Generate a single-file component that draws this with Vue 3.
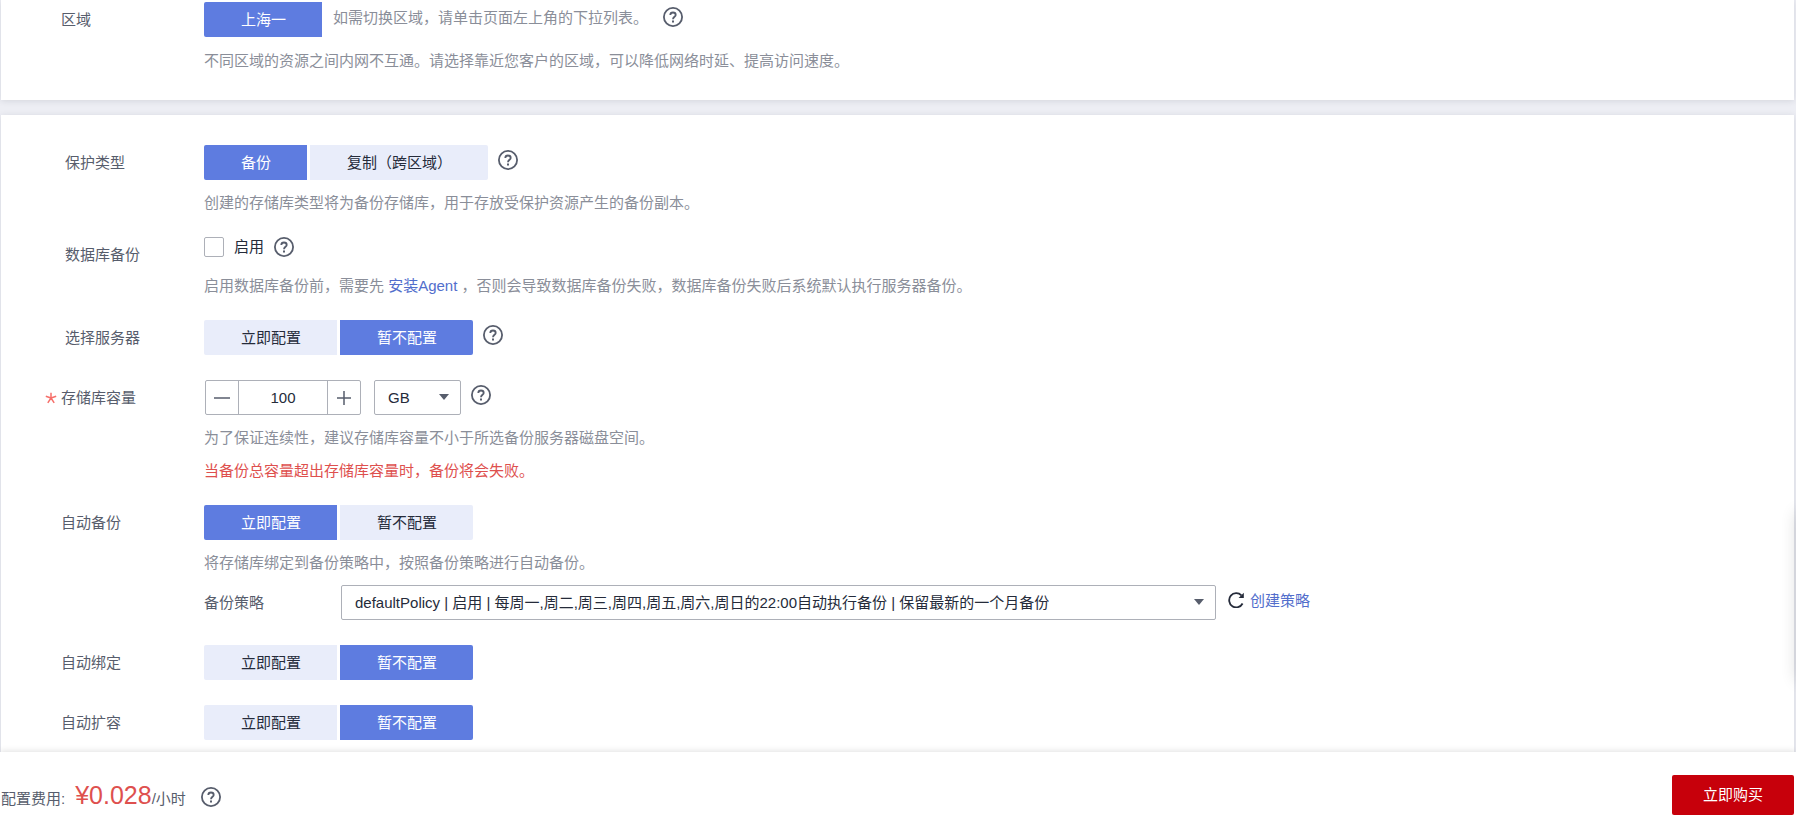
<template>
  <div class="page">
    <section class="panel panel-region">
      <div class="row">
        <span class="label">区域</span>
        <div class="content">
          <div class="line">
            <button type="button" class="seg active">上海一</button>
            <span class="inline-tip">如需切换区域，请单击页面左上角的下拉列表。</span>
            <button type="button" class="help" aria-label="帮助">
              <svg viewBox="0 0 20 20"><circle cx="10" cy="10" r="9.100" /><path d="M7.300 8C7.300 6.500 8.500 5.500 10 5.500s2.700 1 2.700 2.400c0 1.800-2.700 2-2.700 4.300" /><path class="dot" d="M9 13.600h2v1.800h-2z" /></svg>
            </button>
          </div>
          <p class="hint">不同区域的资源之间内网不互通。请选择靠近您客户的区域，可以降低网络时延、提高访问速度。</p>
        </div>
      </div>
    </section>

    <section class="panel panel-config">
      <div v-for="row in rows" :key="row.key" class="row" :class="{ compact: !row.hints }">
        <component
          :is="row.inputId ? 'label' : 'span'"
          class="label"
          :class="{ indent: row.indent }"
          :for="row.inputId"
        >
          <i v-if="row.required" class="star">
            <svg viewBox="0 0 12 12"><path d="M6 .8V6M6 6 .8 4.300M6 6l5.200-1.700M6 6l-3.200 4.800M6 6l3.200 4.800" /></svg>
          </i>
          {{ row.label }}
        </component>
        <div class="content">
          <div class="line" :class="{ 'line-check': row.type === 'check' }">
            <div v-if="row.options" class="segs">
              <button
                v-for="opt in row.options"
                :key="opt"
                type="button"
                class="seg"
                :class="{ active: form[row.key] === opt }"
                @click="form[row.key] = opt"
              >{{ opt }}</button>
            </div>

            <template v-if="row.type === 'check'">
              <input id="db-backup" v-model="form.database" type="checkbox" class="check" />
              <label for="db-backup" class="check-label">启用</label>
            </template>

            <template v-if="row.type === 'size'">
              <div class="stepper">
                <button type="button" aria-label="减少" @click="step(-1)">
                  <svg viewBox="0 0 16 16"><path d="M0 8h16" /></svg>
                </button>
                <input id="capacity" v-model.number="form.capacity" type="text" />
                <button type="button" aria-label="增加" @click="step(1)">
                  <svg viewBox="0 0 16 16"><path d="M1 8h14M8 1v14" /></svg>
                </button>
              </div>
              <div class="select unit">
                <select v-model="form.unit" aria-label="单位">
                  <option>GB</option>
                  <option>TB</option>
                </select>
                <svg class="arrow" viewBox="0 0 10 6"><path d="M0 0h10L5 6z" /></svg>
              </div>
            </template>

            <button v-if="row.help" type="button" class="help" aria-label="帮助">
              <svg viewBox="0 0 20 20"><circle cx="10" cy="10" r="9.100" /><path d="M7.300 8C7.300 6.500 8.500 5.500 10 5.500s2.700 1 2.700 2.400c0 1.800-2.700 2-2.700 4.300" /><path class="dot" d="M9 13.600h2v1.800h-2z" /></svg>
            </button>
          </div>

          <p v-if="row.type === 'check'" class="hint">启用数据库备份前，需要先 <a href="#">安装Agent</a> ，否则会导致数据库备份失败，数据库备份失败后系统默认执行服务器备份。</p>
          <template v-else>
            <p v-for="hint in row.hints" :key="hint" class="hint">{{ hint }}</p>
          </template>
          <p v-if="row.warning" class="hint warning">{{ row.warning }}</p>

          <div v-if="row.key === 'autoBackup'" class="policy">
            <label for="policy" class="policy-label">备份策略</label>
            <div class="select policy-select">
              <select id="policy">
                <option>defaultPolicy | 启用 | 每周一,周二,周三,周四,周五,周六,周日的22:00自动执行备份 | 保留最新的一个月备份</option>
              </select>
              <svg class="arrow" viewBox="0 0 10 6"><path d="M0 0h10L5 6z" /></svg>
            </div>
            <button type="button" class="refresh" aria-label="刷新">
              <svg viewBox="0 0 16 16"><path d="M14.600 11.500A7.100 7.100 0 1 1 13.400 3.300" /><path class="tip" d="M15.800 0.800v5.200h-5.200z" /></svg>
            </button>
            <a href="#" class="create">创建策略</a>
          </div>
        </div>
      </div>
    </section>

    <aside class="float-bar"></aside>

    <footer class="footer">
      <div class="cost">
        <span class="cost-label">配置费用:</span>
        <span class="price">¥0.028</span>
        <span class="per">/小时</span>
        <button type="button" class="help" aria-label="帮助">
          <svg viewBox="0 0 20 20"><circle cx="10" cy="10" r="9.100" /><path d="M7.300 8C7.300 6.500 8.500 5.500 10 5.500s2.700 1 2.700 2.400c0 1.800-2.700 2-2.700 4.300" /><path class="dot" d="M9 13.600h2v1.800h-2z" /></svg>
        </button>
      </div>
      <button type="button" class="buy">立即购买</button>
    </footer>
  </div>
</template>

<script setup>
import { reactive } from 'vue'

const configOptions = ['立即配置', '暂不配置']

const form = reactive({
  protect: '备份',
  database: false,
  server: '暂不配置',
  capacity: 100,
  unit: 'GB',
  autoBackup: '立即配置',
  autoBind: '暂不配置',
  autoExpand: '暂不配置'
})

const rows = [
  {
    key: 'protect',
    label: '保护类型',
    indent: true,
    options: ['备份', '复制（跨区域）'],
    help: true,
    hints: ['创建的存储库类型将为备份存储库，用于存放受保护资源产生的备份副本。']
  },
  { key: 'database', label: '数据库备份', indent: true, type: 'check', help: true, hints: [] },
  { key: 'server', label: '选择服务器', indent: true, options: configOptions, help: true },
  {
    key: 'capacity',
    label: '存储库容量',
    inputId: 'capacity',
    required: true,
    type: 'size',
    help: true,
    hints: ['为了保证连续性，建议存储库容量不小于所选备份服务器磁盘空间。'],
    warning: '当备份总容量超出存储库容量时，备份将会失败。'
  },
  {
    key: 'autoBackup',
    label: '自动备份',
    options: configOptions,
    hints: ['将存储库绑定到备份策略中，按照备份策略进行自动备份。']
  },
  { key: 'autoBind', label: '自动绑定', options: configOptions },
  { key: 'autoExpand', label: '自动扩容', options: configOptions }
]

function step(n) {
  form.capacity = Math.max(10, form.capacity + n)
}
</script>

<style>
body {
  margin: 0;
  background: #edeef4;
}
</style>

<style scoped>
.page {
  display: flex;
  flex-direction: column;
  min-height: 100vh;
  overflow: hidden;
  position: relative;
  font-family: "Liberation Sans", Arial, "Noto Sans CJK SC", sans-serif;
  font-size: 15px;
  line-height: 24px;
  color: #252b3a;
}

button,
input,
select {
  font: inherit;
  color: inherit;
  box-sizing: border-box;
}

button {
  border: 0;
  padding: 0;
  background: none;
  cursor: pointer;
}

a {
  color: #526ecc;
  text-decoration: none;
}

.panel {
  margin: 0 2px 0 1px;
  background: #fff;
  box-shadow: 0 1px 6px rgba(37, 43, 58, 0.12);
}

.panel-region {
  padding: 2px 0 27px;
  margin-bottom: 15px;
}

.panel-region .hint {
  margin-top: 12px;
}

.panel-config {
  flex: 1;
  padding: 30px 0 12px;
}

.row {
  display: flex;
}

.row + .row {
  margin-top: 22px;
}

.row.compact + .row,
.row:nth-child(6) {
  margin-top: 25px;
}

.label {
  flex: 0 0 203px;
  box-sizing: border-box;
  padding-left: 60px;
  line-height: 35px;
  color: #575d6c;
  position: relative;
}

.label.indent {
  padding-left: 64px;
}

.star {
  position: absolute;
  left: 44px;
  top: 12px;
  width: 12px;
  height: 12px;
}

.star svg {
  display: block;
  fill: none;
  stroke: #f66f6a;
  stroke-width: 1.5;
}

.content {
  flex: 1;
  min-width: 0;
}

.line {
  display: flex;
  align-items: flex-start;
  min-height: 35px;
}

.line-check {
  min-height: 26px;
}

.segs {
  display: flex;
  gap: 3px;
}

.seg {
  height: 35px;
  padding: 0 36px 0 37px;
  background: #e9edfa;
}

.seg:first-child {
  border-radius: 2px 0 0 2px;
}

.seg:last-child {
  border-radius: 0 2px 2px 0;
}

.seg.active {
  background: #5e7ce0;
  color: #fff;
}

.inline-tip {
  margin: 0 5px 0 11px;
  line-height: 32px;
  color: #8a8e99;
}

.help {
  width: 20px;
  height: 20px;
  margin: 5px 0 0 10px;
}

.line-check .help {
  margin-top: 0;
}

.help svg {
  display: block;
  fill: none;
  stroke: #575d6c;
  stroke-width: 1.8;
}

.help .dot {
  fill: #575d6c;
  stroke: none;
}

.hint {
  margin: 11px 0 0;
  color: #8a8e99;
}

.hint + .hint {
  margin-top: 9px;
}

.hint.warning {
  color: #de504e;
}

.check {
  appearance: none;
  width: 20px;
  height: 20px;
  margin: 0;
  border: 1px solid #adb0b8;
  border-radius: 2px;
  background: #fff;
}

.check:checked {
  background: #5e7ce0;
}

.check-label {
  margin-left: 10px;
  line-height: 20px;
}

.stepper {
  display: flex;
  width: 156px;
  height: 35px;
  margin: 0 13px 0 1px;
  box-sizing: border-box;
  border: 1px solid #adb0b8;
  border-radius: 2px;
}

.stepper button {
  flex: 0 0 32px;
  display: flex;
  align-items: center;
  justify-content: center;
}

.stepper svg {
  width: 16px;
  height: 16px;
  fill: none;
  stroke: #575d6c;
  stroke-width: 1.5;
}

.stepper input {
  flex: 1;
  min-width: 0;
  padding: 0;
  border: solid #adb0b8;
  border-width: 0 1px;
  background: none;
  text-align: center;
}

.select {
  position: relative;
  height: 35px;
}

.select select {
  display: block;
  width: 100%;
  height: 100%;
  padding: 0 32px 0 13px;
  appearance: none;
  border: 1px solid #adb0b8;
  border-radius: 2px;
  background: #fff;
}

.arrow {
  position: absolute;
  right: 12px;
  top: 14px;
  width: 10px;
  height: 6px;
  fill: #575d6c;
  pointer-events: none;
}

.unit {
  width: 87px;
}

.policy {
  display: flex;
  margin-top: 10px;
}

.policy-label {
  flex: 0 0 137px;
  line-height: 35px;
  color: #575d6c;
}

.policy-select {
  flex: 0 1 875px;
}

.refresh {
  width: 16px;
  height: 16px;
  margin: 7px 6px 0 12px;
}

.refresh svg {
  display: block;
  fill: none;
  stroke: #252b3a;
  stroke-width: 1.8;
}

.refresh .tip {
  fill: #252b3a;
  stroke: none;
}

.create {
  line-height: 32px;
}

/* collapsed tool bar, only its shadow shows at the window edge */
.float-bar {
  position: absolute;
  top: 512px;
  right: -40px;
  width: 40px;
  height: 168px;
  box-shadow: 0 0 16px rgba(0, 0, 0, 0.14);
}

.footer {
  display: flex;
  align-items: flex-start;
  justify-content: space-between;
  height: 65px;
  padding: 0 2px 0 1px;
  box-sizing: border-box;
  background: #fff;
  box-shadow: 0 -1px 6px rgba(0, 0, 0, 0.12);
  position: relative;
}

.cost {
  display: flex;
  align-items: baseline;
  padding-top: 31px;
  color: #575d6c;
}

.price {
  margin-left: 10px;
  font-size: 25px;
  color: #de504e;
}

.cost .help {
  align-self: flex-start;
  margin: 4px 0 0 15px;
}

.buy {
  width: 122px;
  height: 40px;
  margin-top: 23px;
  border-radius: 2px;
  background: #c7000b;
  color: #fff;
}
</style>
